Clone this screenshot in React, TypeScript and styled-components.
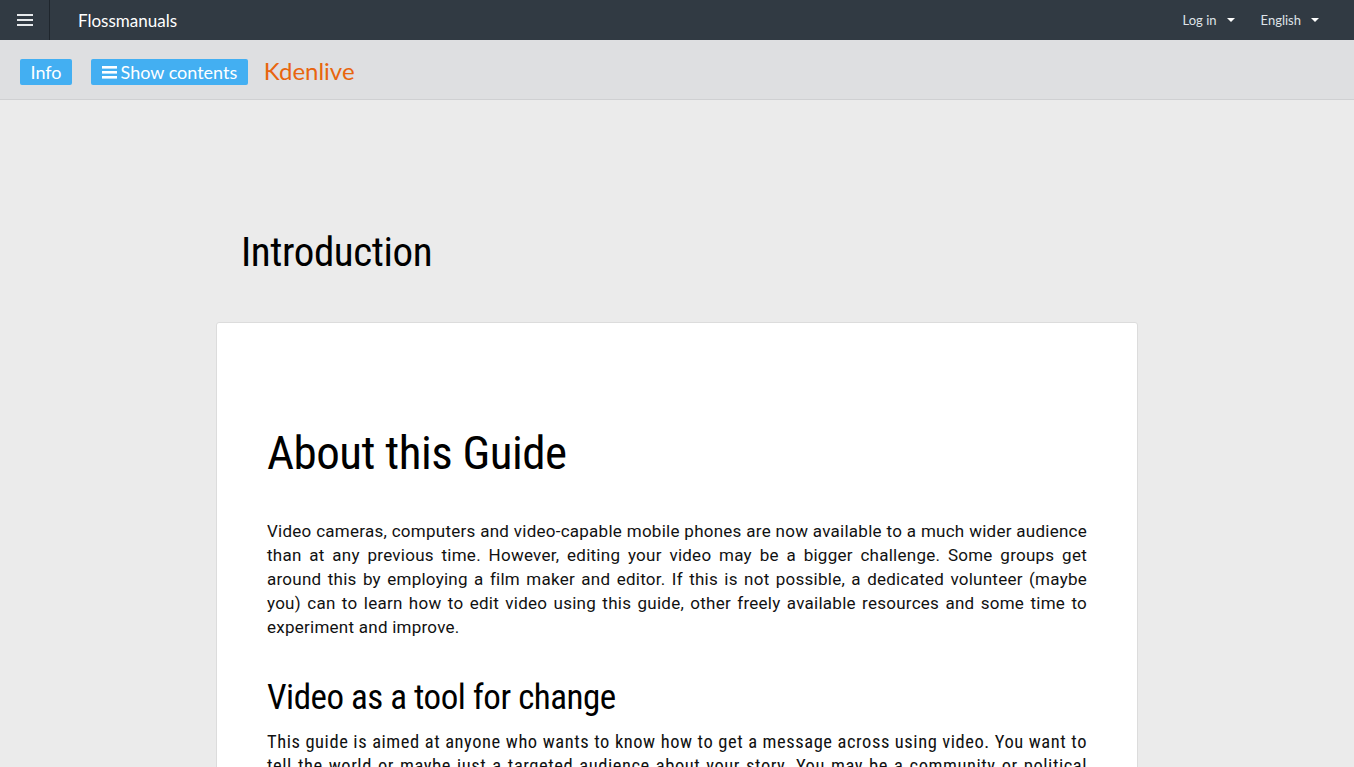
import React from "react";
import styled, { createGlobalStyle } from "styled-components";

const GlobalStyle = createGlobalStyle`
  html, body {
    margin: 0;
    padding: 0;
    background: #ebebeb;
  }
  body {
    font-family: Lato, "Liberation Sans", sans-serif;
  }
`;

const condensed = `"Roboto Condensed", "Liberation Sans Narrow", "DejaVu Sans Condensed", Roboto, sans-serif`;

const TopBar = styled.header`
  height: 40px;
  background: #313a43;
  display: flex;
  align-items: center;
  color: #fff;
`;

const MenuCell = styled.div`
  width: 49px;
  height: 40px;
  border-right: 1px solid #1f262d;
  display: flex;
  align-items: center;
  justify-content: center;
`;

const Brand = styled.div`
  margin-left: 28px;
  font-size: 17px;
  flex: 1;
`;

const NavItem = styled.div`
  display: flex;
  align-items: center;
  gap: 10px;
  font-size: 13px;
  color: #dfe3e8;
  margin-right: 26px;
  &:last-child {
    margin-right: 35px;
  }
`;

const Caret = styled.span`
  width: 0;
  height: 0;
  border-left: 4px solid transparent;
  border-right: 4px solid transparent;
  border-top: 4px solid #fff;
`;

const SubBar = styled.div`
  height: 59px;
  background: #dedfe1;
  border-bottom: 1px solid #cfd0d2;
  display: flex;
  align-items: center;
  padding-left: 20px;
`;

const BlueButton = styled.button`
  height: 26px;
  margin-top: 5px;
  margin-right: 19px;
  padding: 0 10.5px;
  border: none;
  border-radius: 2px;
  background: #43aff2;
  color: #fff;
  font-family: Lato, "Liberation Sans", sans-serif;
  font-size: 18px;
  display: flex;
  align-items: center;
  gap: 4px;
  & + & {
    margin-right: 16px;
  }
`;

const BookTitle = styled.div`
  color: #e8650e;
  font-size: 24px;
  margin-top: 2px;
`;

const Main = styled.main`
  width: 922px;
  margin: 0 auto;
  padding-top: 128px;
`;

const PageTitle = styled.h1`
  font-family: ${condensed};
  font-stretch: condensed;
  font-weight: 400;
  font-size: 41px;
  letter-spacing: -0.4px;
  line-height: 48px;
  margin: 0 0 46px 25px;
  color: #000;
`;

const Card = styled.article`
  background: #fff;
  border: 1px solid #dcdcdc;
  border-radius: 3px;
  padding: 102px 50px 40px;
`;

const SectionTitle = styled.h2<{ $size: number }>`
  font-family: ${condensed};
  font-stretch: condensed;
  font-weight: 400;
  font-size: ${({ $size }) => $size}px;
  letter-spacing: -0.5px;
  line-height: 1.2;
  margin: 0;
  color: #000;
`;

const Para = styled.p<{ $narrow?: boolean }>`
  font-family: ${({ $narrow }) => ($narrow ? condensed : `Roboto, "Liberation Sans", sans-serif`)};
  font-stretch: ${({ $narrow }) => ($narrow ? "condensed" : "normal")};
  font-size: ${({ $narrow }) => ($narrow ? "18.5px" : "17px")};
  letter-spacing: ${({ $narrow }) => ($narrow ? "0.55px" : "0.25px")};
  line-height: 24px;
  text-align: justify;
  color: #111;
  margin: 0;
`;

const HamburgerIcon = () => (
  <svg width="16" height="12" viewBox="0 0 16 12">
    <rect x="0" y="0" width="16" height="2" fill="#e6e9ec" />
    <rect x="0" y="5" width="16" height="2" fill="#e6e9ec" />
    <rect x="0" y="10" width="16" height="2" fill="#e6e9ec" />
  </svg>
);

const BarsIcon = () => (
  <svg width="15" height="14" viewBox="0 0 15 14">
    <rect x="0" y="1" width="15" height="2.6" fill="#fff" />
    <rect x="0" y="6" width="15" height="2.6" fill="#fff" />
    <rect x="0" y="11" width="15" height="2.6" fill="#fff" />
  </svg>
);

export default function App() {
  return (
    <>
      <GlobalStyle />
      <TopBar>
        <MenuCell>
          <HamburgerIcon />
        </MenuCell>
        <Brand>Flossmanuals</Brand>
        <NavItem>
          Log in <Caret />
        </NavItem>
        <NavItem>
          English <Caret />
        </NavItem>
      </TopBar>
      <SubBar>
        <BlueButton>Info</BlueButton>
        <BlueButton>
          <BarsIcon />
          Show contents
        </BlueButton>
        <BookTitle>Kdenlive</BookTitle>
      </SubBar>
      <Main>
        <PageTitle>Introduction</PageTitle>
        <Card>
          <SectionTitle $size={47} style={{ marginBottom: 38 }}>
            About this Guide
          </SectionTitle>
          <Para>
            Video cameras, computers and video-capable mobile phones are now available to a much
            wider audience than at any previous time. However, editing your video may be a bigger
            challenge. Some groups get around this by employing a film maker and editor. If this is
            not possible, a dedicated volunteer (maybe you) can to learn how to edit video using
            this guide, other freely available resources and some time to experiment and improve.
          </Para>
          <SectionTitle $size={35} style={{ marginTop: 38, marginBottom: 11 }}>
            Video as a tool for change
          </SectionTitle>
          <Para $narrow>
            This guide is aimed at anyone who wants to know how to get a message across using
            video. You want to tell the world or maybe just a targeted audience about your story.
            You may be a community or political group, a campaigner or simply someone who wants to
            share an experience with others.
          </Para>
        </Card>
      </Main>
    </>
  );
}
